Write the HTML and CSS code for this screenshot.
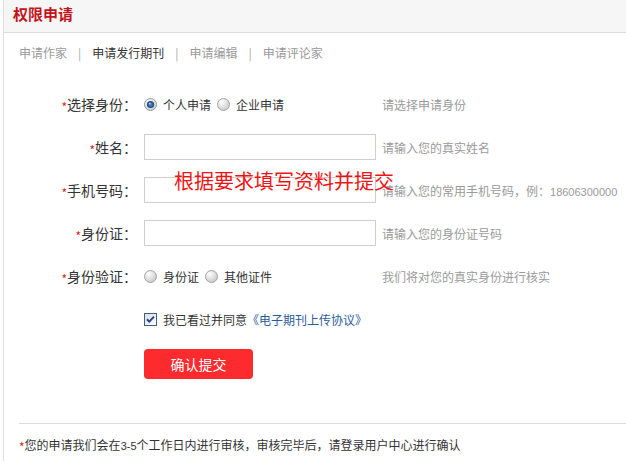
FILE: index.html
```html
<!DOCTYPE html>
<html lang="zh-CN">
<head>
<meta charset="utf-8">
<title>权限申请</title>
<link rel="stylesheet" href="styles.css">
</head>
<body>
<div class="page">
  <div class="header"><h1 class="title">权限申请</h1></div>
  <div class="tabs">
    <span class="tab">申请作家</span><span class="sep">|</span><span class="tab active">申请发行期刊</span><span class="sep">|</span><span class="tab">申请编辑</span><span class="sep">|</span><span class="tab">申请评论家</span>
  </div>
  <div class="form">
    <div class="row">
      <div class="label"><span class="req">*</span>选择身份：</div>
      <div class="control">
        <span class="radio checked"><svg width="13" height="13" viewBox="0 0 13 13"><defs><radialGradient id="rg1" cx="0.35" cy="0.3" r="0.8"><stop offset="0" stop-color="#ffffff"/><stop offset="1" stop-color="#c8c8c8"/></radialGradient></defs><circle cx="6.5" cy="6.5" r="6" fill="url(#rg1)" stroke="#8d9aa6"/><circle cx="6.5" cy="6.5" r="3.6" fill="#234a74"/><circle cx="6.5" cy="6.5" r="2.3" fill="#3d7cbb"/><circle cx="5.7" cy="5.6" r="0.9" fill="#b9d6f2"/></svg></span><span class="opt">个人申请</span>
        <span class="radio"><svg width="13" height="13" viewBox="0 0 13 13"><defs><radialGradient id="rg2" cx="0.35" cy="0.3" r="0.8"><stop offset="0" stop-color="#ffffff"/><stop offset="1" stop-color="#c4c4c4"/></radialGradient></defs><circle cx="6.5" cy="6.5" r="6" fill="url(#rg2)" stroke="#a4a4a4"/></svg></span><span class="opt">企业申请</span>
      </div>
      <div class="hint">请选择申请身份</div>
    </div>
    <div class="row">
      <div class="label"><span class="req">*</span>姓名：</div>
      <div class="control"><input class="field" type="text"></div>
      <div class="hint">请输入您的真实姓名</div>
    </div>
    <div class="row">
      <div class="label"><span class="req">*</span>手机号码：</div>
      <div class="control"><input class="field" type="text"></div>
      <div class="hint">请输入您的常用手机号码，例：<span class="num">18606300000</span></div>
    </div>
    <div class="row">
      <div class="label"><span class="req">*</span>身份证：</div>
      <div class="control"><input class="field" type="text"></div>
      <div class="hint">请输入您的身份证号码</div>
    </div>
    <div class="row">
      <div class="label"><span class="req">*</span>身份验证：</div>
      <div class="control">
        <span class="radio"><svg width="13" height="13" viewBox="0 0 13 13"><defs><radialGradient id="rg3" cx="0.35" cy="0.3" r="0.8"><stop offset="0" stop-color="#ffffff"/><stop offset="1" stop-color="#c4c4c4"/></radialGradient></defs><circle cx="6.5" cy="6.5" r="6" fill="url(#rg3)" stroke="#a4a4a4"/></svg></span><span class="opt">身份证</span>
        <span class="radio"><svg width="13" height="13" viewBox="0 0 13 13"><defs><radialGradient id="rg4" cx="0.35" cy="0.3" r="0.8"><stop offset="0" stop-color="#ffffff"/><stop offset="1" stop-color="#c4c4c4"/></radialGradient></defs><circle cx="6.5" cy="6.5" r="6" fill="url(#rg4)" stroke="#a4a4a4"/></svg></span><span class="opt">其他证件</span>
      </div>
      <div class="hint">我们将对您的真实身份进行核实</div>
    </div>
    <div class="row agree-row">
      <div class="label"></div>
      <div class="agree">
        <span class="checkbox"><svg width="13" height="13" viewBox="0 0 13 13"><defs><linearGradient id="cg" x1="0" y1="0" x2="1" y2="1"><stop offset="0" stop-color="#dcdcd6"/><stop offset="1" stop-color="#ffffff"/></linearGradient></defs><rect x="0.5" y="0.5" width="12" height="12" fill="url(#cg)" stroke="#3d5f88"/><path d="M3 6.2 L5.3 8.6 L10 3.6" fill="none" stroke="#2a3f9a" stroke-width="2"/></svg></span><span class="opt">我已看过并同意</span><a class="link" href="#">《电子期刊上传协议》</a>
      </div>
    </div>
    <div class="row btn-row">
      <div class="label"></div>
      <button class="submit" type="button">确认提交</button>
    </div>
  </div>
  <div class="footer"><span class="req">*</span>您的申请我们会在<span class="num">3-5</span>个工作日内进行审核，审核完毕后，请登录用户中心进行确认</div>
  <div class="overlay">根据要求填写资料并提交</div>
</div>
</body>
</html>
```

FILE: styles.css
```css
html, body {
  margin: 0;
  padding: 0;
  background: #ffffff;
}
body {
  font-family: "Noto Sans CJK SC", "Liberation Sans", sans-serif;
  font-size: 12px;
  color: #333333;
}
.page {
  position: relative;
  margin-left: 3px;
  border-left: 1px solid #dedede;
  min-height: 461px;
  box-sizing: border-box;
}
.header {
  height: 32px;
  background: #f6f6f6;
  border-bottom: 1px solid #dcdcdc;
  display: flex;
  align-items: center;
  padding-left: 9px;
}
.title {
  margin: 0;
  font-size: 15px;
  font-weight: bold;
  color: #c3141c;
  line-height: 20px;
  position: relative;
  top: -2px;
}
.tabs {
  margin-top: 10px;
  padding-left: 15px;
  line-height: 20px;
  height: 20px;
  display: flex;
  align-items: center;
}
.tab { color: #9a9a9a; }
.tab.active { color: #333333; }
.sep {
  color: #a8a8a8;
  margin: 0 11px;
}
.form {
  margin-top: 28px;
}
.row {
  display: flex;
  align-items: center;
  height: 26px;
  margin-bottom: 17px;
}
.label {
  width: 133px;
  flex: none;
  text-align: right;
  font-size: 14px;
  color: #333333;
  margin-right: 7px;
}
.req {
  color: #e01b1b;
  font-size: 12px;
  vertical-align: -2px;
}
.control {
  width: 232px;
  flex: none;
  display: flex;
  align-items: center;
}
.field {
  width: 232px;
  height: 26px;
  box-sizing: border-box;
  border: 1px solid #cfcfcf;
  margin: 0;
  padding: 0 4px;
  font-family: inherit;
  font-size: 12px;
  outline: none;
}
.radio, .checkbox {
  display: inline-flex;
  width: 13px;
  height: 13px;
  flex: none;
}
.radio svg, .checkbox svg { display: block; }
.opt {
  margin-left: 6px;
  margin-right: 6px;
  color: #333333;
}
.hint {
  margin-left: 6px;
  color: #9a9a9a;
  white-space: nowrap;
}
.num {
  font-family: "Liberation Sans", sans-serif;
  font-size: 11px;
}
.agree {
  display: flex;
  align-items: center;
}
.agree .opt { margin-right: 0; }
.link {
  color: #2b5b9c;
  text-decoration: none;
}
.btn-row {
  height: 30px;
  margin-bottom: 0;
}
.submit {
  width: 109px;
  height: 30px;
  border: none;
  border-radius: 4px;
  background: #fd2a2e;
  color: #ffffff;
  font-family: inherit;
  font-size: 14px;
  padding: 0;
}
.footer {
  margin-top: 44px;
  margin-left: 15px;
  border-top: 1px solid #dcdcdc;
  padding-top: 11px;
  line-height: 20px;
  color: #333333;
}
.overlay {
  position: absolute;
  left: 170px;
  top: 169px;
  font-size: 20px;
  line-height: 24px;
  color: #f01414;
  white-space: nowrap;
}
```
